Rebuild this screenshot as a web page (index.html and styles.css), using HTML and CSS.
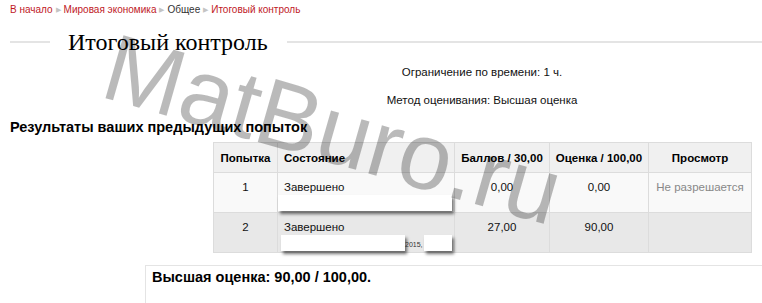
FILE: index.html
```html
<!DOCTYPE html>
<html lang="ru">

<head>
    <meta charset="UTF-8">
    <title>Итоговый контроль</title>
    <link rel="stylesheet" href="styles.css">
</head>

<body>
    <div class="page">
        <nav class="breadcrumb">
            <a href="#">В начало</a><span class="sep">&#9654;</span><a href="#">Мировая экономика</a><span class="sep">&#9654;</span><span class="plain">Общее</span><span class="sep">&#9654;</span><a href="#">Итоговый контроль</a>
        </nav>

        <h2 class="quiz-title"><span>Итоговый контроль</span></h2>

        <div class="quizinfo">
            <p>Ограничение по времени: 1 ч.</p>
            <p>Метод оценивания: Высшая оценка</p>
        </div>

        <h3 class="attempts-title">Результаты ваших предыдущих попыток</h3>

        <table class="attempts">
            <thead>
                <tr>
                    <th class="c-num">Попытка</th>
                    <th class="c-state">Состояние</th>
                    <th class="c-marks">Баллов / 30,00</th>
                    <th class="c-grade">Оценка / 100,00</th>
                    <th class="c-review">Просмотр</th>
                </tr>
            </thead>
            <tbody>
                <tr class="odd">
                    <td class="c-num">1</td>
                    <td class="c-state">
                        Завершено
                        <div class="hidden-line"><span class="blank blank-wide"></span></div>
                    </td>
                    <td class="c-marks">0,00</td>
                    <td class="c-grade">0,00</td>
                    <td class="c-review muted">Не разрешается</td>
                </tr>
                <tr class="even">
                    <td class="c-num">2</td>
                    <td class="c-state">
                        Завершено
                        <div class="hidden-line"><span class="blank blank-date"></span><span class="tiny">2015,</span><span class="blank blank-time"></span></div>
                    </td>
                    <td class="c-marks">27,00</td>
                    <td class="c-grade">90,00</td>
                    <td class="c-review"></td>
                </tr>
            </tbody>
        </table>

        <div class="feedback">
            <h3>Высшая оценка: 90,00 / 100,00.</h3>
        </div>

        <div class="watermark">MatBuro.ru</div>
    </div>
</body>

</html>
```

FILE: styles.css
```css
body {
    font-family: "Liberation Sans", Arial, sans-serif;
    color: #111;
    margin: 0;
    padding: 0;
    background: #fff;
}

.page {
    position: relative;
    padding: 3px 10px 0;
    height: 300px;
    overflow: hidden;
}

/* breadcrumb */
.breadcrumb {
    font-size: 10px;
    line-height: 14px;
}

.breadcrumb a {
    color: #c0191f;
    text-decoration: none;
}

.breadcrumb .plain {
    color: #333;
}

.breadcrumb .sep {
    color: #c4c4c4;
    font-size: 7px;
    margin: 0 3px;
    vertical-align: 1px;
}

/* title with lines */
.quiz-title {
    display: flex;
    align-items: center;
    margin: 12px -10px 0 0;
    font-family: "Liberation Serif", "Times New Roman", serif;
    font-weight: normal;
    font-size: 24px;
    line-height: 26px;
    color: #000;
}

.quiz-title::before,
.quiz-title::after {
    content: "";
    height: 2px;
    background: #e4e4e4;
}

.quiz-title::before {
    width: 40px;
    margin-right: 18px;
}

.quiz-title::after {
    flex: 1;
    margin-left: 19px;
}

/* info */
.quizinfo {
    margin: 9px -10px 0 192px;
    text-align: center;
    font-size: 11.5px;
}

.quizinfo p {
    margin: 0 0 12px;
    line-height: 16px;
}

.attempts-title {
    margin: -2px 0 6px;
    font-size: 14.5px;
    line-height: 18px;
    color: #000;
}

/* table */
.attempts {
    border-collapse: collapse;
    table-layout: fixed;
    width: 538px;
    margin-left: 203px;
    font-size: 11.5px;
}

.attempts th,
.attempts td {
    border: 1px solid #dcdcdc;
    padding: 0 4px;
    box-sizing: border-box;
}

.attempts th {
    height: 30px;
    background: #f0f0f0;
    font-weight: bold;
    color: #000;
    vertical-align: middle;
    white-space: nowrap;
}

.attempts td {
    height: 40px;
    vertical-align: top;
    padding-top: 8px;
    line-height: 13px;
}

.attempts tr.odd td {
    background: #f9f9f9;
}

.attempts tr.even td {
    background: #e8e8e8;
}

.c-num {
    width: 64px;
    text-align: center;
}

.attempts .c-state {
    width: 177px;
    text-align: left;
    padding-left: 6px;
}

.c-marks {
    width: 95px;
    text-align: center;
}

.c-grade {
    width: 99px;
    text-align: center;
}

.c-review {
    width: 103px;
    text-align: center;
}

.muted {
    color: #888;
    white-space: nowrap;
}

.hidden-line {
    display: flex;
    align-items: flex-end;
    height: 17px;
}

.blank {
    display: inline-block;
    flex: none;
    height: 16px;
    background: #fff;
    box-shadow: 2px 3px 3px rgba(0, 0, 0, 0.55);
}

.blank-wide {
    width: 174px;
    margin-left: -6px;
}

.blank-date {
    width: 124px;
    margin-left: -3px;
}

.blank-time {
    width: 28px;
    margin-left: 1px;
}

.tiny {
    font-size: 7px;
    line-height: 9px;
    color: #333;
    margin-bottom: 2px;
}

/* feedback */
.feedback {
    margin: 12px -10px 0 135px;
    border-top: 1px solid #e4e4e4;
    border-left: 1px solid #e4e4e4;
    padding: 3px 6px 20px;
}

.feedback h3 {
    margin: 0;
    font-size: 14.5px;
    line-height: 17px;
    color: #000;
}

/* overlay watermark */
.watermark {
    position: absolute;
    left: 98px;
    top: 16px;
    font-size: 95px;
    line-height: 1;
    color: rgba(0, 0, 0, 0.27);
    white-space: nowrap;
    transform-origin: 0 80px;
    transform: rotate(16deg);
    pointer-events: none;
}
```
